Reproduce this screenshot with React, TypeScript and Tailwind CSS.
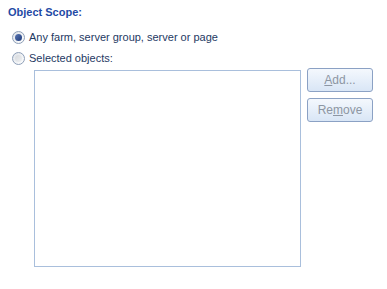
import React from "react";

function Radio({ checked }: { checked?: boolean }) {
  return (
    <span className="relative flex h-[13px] w-[13px] shrink-0 items-center justify-center rounded-full border border-[#8e9fb8] bg-gradient-to-br from-[#dfe3e8] to-[#ffffff]">
      {checked ? (
        <span className="h-[7px] w-[7px] rounded-full bg-gradient-to-br from-[#5b77b4] to-[#1f3b7a]" />
      ) : (
        <span className="h-[7px] w-[7px] rounded-full bg-gradient-to-br from-[#d6d9dd] to-[#eef0f2]" />
      )}
    </span>
  );
}

function Btn({ children }: { children: React.ReactNode }) {
  return (
    <button className="flex h-[24px] w-[66px] items-center justify-center rounded-[3px] border border-[#8ba1c4] bg-gradient-to-b from-[#f4f8fd] to-[#d9e6f6] text-[12px] text-[#8d96a3]">
      {children}
    </button>
  );
}

export default function App() {
  return (
    <div
      className="h-[289px] w-[387px] bg-white"
      style={{ fontFamily: '"Liberation Sans", Arial, sans-serif' }}
    >
      <div className="pl-[8px] pt-[4px]">
        <p className="text-[11px] font-bold leading-[16px] text-[#1f4aa5]">
          Object Scope:
        </p>
        <div className="mt-[9px] flex flex-col gap-[5px] pl-[4px]">
          <label className="flex h-[16px] items-center gap-[4px] text-[11px] text-[#1e3963]">
            <Radio checked />
            <span>Any farm, server group, server or page</span>
          </label>
          <label className="flex h-[16px] items-center gap-[4px] text-[11px] text-[#1e3963]">
            <Radio />
            <span>Selected objects:</span>
          </label>
        </div>
        <div className="mt-[2px] flex gap-[6px] pl-[26px]">
          <div className="mt-[2px] h-[197px] w-[267px] border border-[#a9bfdc] bg-white" />
          <div className="flex flex-col gap-[6px]">
            <Btn>
              <span>
                <span className="underline">A</span>dd...
              </span>
            </Btn>
            <Btn>
              <span>
                Re<span className="underline">m</span>ove
              </span>
            </Btn>
          </div>
        </div>
      </div>
    </div>
  );
}
